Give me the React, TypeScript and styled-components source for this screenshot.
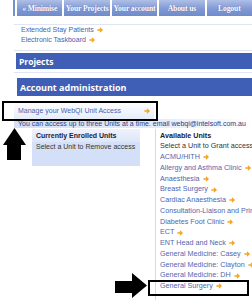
import React from 'react';
import styled, { createGlobalStyle } from 'styled-components';

const GlobalStyle = createGlobalStyle`
    html, body {
        margin: 0;
        padding: 0;
        background: #fff;
    }
    body {
        font-family: 'Liberation Sans', Arial, sans-serif;
    }
`;

const Page = styled.div`
    position: relative;
    width: 252px;
    height: 300px;
    overflow: hidden;
    background: #fff;
`;

const NavBar = styled.div`
    display: flex;
    gap: 2px;
    height: 16px;
    padding-left: 13px;
`;

const NavEdge = styled.div`
    width: 2px;
    background: #7590cf;
`;

const Tab = styled.div`
    flex: 1 1 0;
    min-width: 0;
    display: flex;
    align-items: center;
    justify-content: center;
    white-space: nowrap;
    overflow: hidden;
    background: linear-gradient(#aebfe6, #8199d5 55%, #6f8bcb);
    color: #fff;
    font-family: 'Liberation Serif', 'Times New Roman', serif;
    font-weight: bold;
    font-size: 7.6px;
    letter-spacing: -0.1px;
    text-shadow: 0 0 1px rgba(40, 60, 120, 0.5);
`;

const Divider = styled.div<{ top: number }>`
    height: 1px;
    margin: ${(p) => p.top}px 0 0 14px;
    background: #dfe5f2;
`;

const LinkList = styled.div`
    padding-left: 21px;
    line-height: 10px;
    font-size: 7px;
    color: #4b62ad;
`;

const LinkLine = styled.div`
    display: flex;
    align-items: center;
    gap: 3px;
`;

const SectionBar = styled.div<{ inset: number; h: number; size: number; top: number }>`
    display: flex;
    align-items: center;
    height: ${(p) => p.h}px;
    margin: ${(p) => p.top}px 0 0 ${(p) => p.inset}px;
    padding-left: 3px;
    background: #3f5fb6;
    color: #fff;
    font-family: 'Open Sans', 'Liberation Sans', sans-serif;
    font-weight: bold;
    font-size: ${(p) => p.size}px;
`;

const ManageWrap = styled.div`
    position: relative;
    margin: 6px 0 0 14px;
    width: 140px;
`;

const ManageRow = styled.div`
    display: flex;
    align-items: center;
    justify-content: space-between;
    height: 17px;
    padding: 0 4px;
    background: linear-gradient(#ffffff, #e6ecf9);
    font-size: 7px;
    color: #4b62ad;
`;

const Highlight = styled.div`
    position: absolute;
    box-sizing: border-box;
    border: 2px solid #000;
`;

const Notice = styled.div`
    height: 9px;
    margin-left: 14px;
    padding-left: 4px;
    line-height: 9px;
    white-space: nowrap;
    font-size: 7px;
    color: #2c3d7e;
    background: linear-gradient(90deg, #d5e0f6, #e3eaf9 60%, #ffffff);
`;

const Units = styled.div`
    display: flex;
    align-items: flex-start;
    margin-top: 1px;
`;

const EnrolledPanel = styled.div`
    flex: 0 0 108px;
    height: 37px;
    margin-left: 32px;
    box-sizing: border-box;
    background: #d4e0f7;
    font-size: 7px;
    line-height: 10.75px;
    color: #333;
    white-space: nowrap;
    overflow: hidden;
`;

const EnrolledHead = styled.div`
    padding: 2px 0 0 4px;
    background: linear-gradient(#eef2fb, #dde6f8);
`;

const PanelHead = styled.div`
    font-weight: bold;
    color: #1d2033;
`;

const PanelText = styled.div`
    padding-left: 4px;
`;

const AvailableColumn = styled.div`
    flex: 1 1 0;
    min-width: 0;
    margin-left: 15px;
    padding: 1.5px 0 12px 4px;
    border-left: 1px solid #cfdaf2;
    font-size: 7.2px;
    line-height: 10.75px;
    color: #333;
    white-space: nowrap;
    overflow: hidden;
`;

const UnitLink = styled.div`
    display: flex;
    align-items: center;
    gap: 3px;
    color: #5066b0;
`;

const ArrowIcon = () => (
    <svg width="6" height="6" viewBox="0 0 8 8" style={{ flexShrink: 0 }}>
        <path d="M0.5 4 H6.5 M4 1.2 L6.8 4 L4 6.8" fill="none" stroke="#f5a31c" strokeWidth="1.7" />
    </svg>
);

const Pointer = styled.svg`
    position: absolute;
`;

const units = [
    'ACMU/HITH',
    'Allergy and Asthma Clinic',
    'Anaesthesia',
    'Breast Surgery',
    'Cardiac Anaesthesia',
    'Consultation-Liaison and Primary Care Psychiatry',
    'Diabetes Foot Clinic',
    'ECT',
    'ENT Head and Neck',
    'General Medicine: Casey',
    'General Medicine: Clayton',
    'General Medicine: DH',
    'General Surgery',
];

const tabs = ['« Minimise', 'Your Projects', 'Your account', 'About us', 'Logout'];

export default function App() {
    return (
        <Page>
            <GlobalStyle />
            <NavBar>
                <NavEdge />
                {tabs.map((t) => (
                    <Tab key={t}>{t}</Tab>
                ))}
            </NavBar>
            <Divider top={8} />
            <LinkList>
                <LinkLine>
                    Extended Stay Patients <ArrowIcon />
                </LinkLine>
                <LinkLine>
                    Electronic Taskboard <ArrowIcon />
                </LinkLine>
            </LinkList>
            <Divider top={5} />
            <SectionBar inset={16} h={16} size={8.5} top={2}>
                Projects
            </SectionBar>
            <Divider top={3} />
            <SectionBar inset={17} h={18} size={9} top={5}>
                Account administration
            </SectionBar>
            <ManageWrap>
                <ManageRow>
                    Manage your WebQI Unit Access
                    <ArrowIcon />
                </ManageRow>
                <Highlight style={{ left: -12, top: -1, width: 156, height: 20 }} />
            </ManageWrap>
            <Notice>You can access up to three Units at a time. email webqi@intelsoft.com.au</Notice>
            <Units>
                <EnrolledPanel>
                    <EnrolledHead>
                        <PanelHead>Currently Enrolled Units</PanelHead>
                    </EnrolledHead>
                    <PanelText>Select a Unit to Remove access</PanelText>
                </EnrolledPanel>
                <AvailableColumn>
                    <PanelHead>Available Units</PanelHead>
                    <div>Select a Unit to Grant access</div>
                    {units.map((u) => (
                        <UnitLink key={u}>
                            {u} <ArrowIcon />
                        </UnitLink>
                    ))}
                </AvailableColumn>
            </Units>
            <Highlight style={{ left: 148, top: 280, width: 101, height: 16 }} />
            <Pointer width="24" height="33" viewBox="0 0 24 33" style={{ left: 3, top: 128 }}>
                <polygon points="11.5,0 23,17 18,17 18,32 4,32 4,17 0,17" fill="#000" />
            </Pointer>
            <Pointer width="34" height="27" viewBox="0 0 34 27" style={{ left: 114, top: 272 }}>
                <polygon points="1,9 18,9 18,1 33,13.5 18,26 18,21 1,21" fill="#000" />
            </Pointer>
        </Page>
    );
}
